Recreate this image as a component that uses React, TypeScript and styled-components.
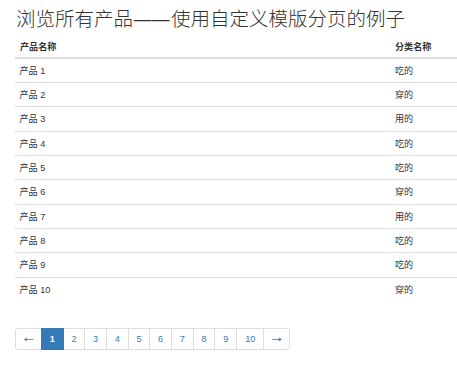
import React from "react";
import styled, { createGlobalStyle } from "styled-components";

const GlobalStyle = createGlobalStyle`
  html, body { margin: 0; padding: 0; background: #fff; }
  body {
    font-family: "Liberation Sans", "Noto Sans CJK SC", Arial, sans-serif;
    color: #333;
    font-size: 9.1px;
  }
`;

const Page = styled.div`
  padding: 0 0 0 15px;
`;

const Title = styled.h2`
  margin: 7px 0 5px 1px;
  height: 21.5px;
  font-size: 19.5px;
  line-height: 21.5px;
  font-weight: 300;
  color: #333;
  font-family: "Noto Sans CJK SC", "Liberation Sans", sans-serif;
  white-space: nowrap;
`;

const Dash = styled.span`
  font-family: "DejaVu Sans", sans-serif;
  font-weight: 400;
  line-height: 0;
  letter-spacing: -1.5px;
  margin-right: 2px;
`;

const Table = styled.table`
  width: 442px;
  border-collapse: collapse;
  border-spacing: 0;
  margin-bottom: 0;
`;

const Th = styled.th<{ $w: number }>`
  width: ${(p) => p.$w}px;
  text-align: left;
  font-weight: 700;
  padding: 6px 5px 4.4px;
  line-height: 13px;
  border-bottom: 2px solid #ddd;
  font-family: "Noto Sans CJK SC", sans-serif;
  font-size: 9.1px;
  box-sizing: border-box;
`;

const Td = styled.td`
  padding: 6px 5px 4px;
  line-height: 13.3px;
  border-top: 1px solid #ddd;
  font-size: 9.1px;
  &:first-child { padding-left: 4.5px; }
`;

const Row = styled.tr`
  &:first-child td { border-top: none; }
`;

const Pager = styled.ul`
  display: flex;
  list-style: none;
  margin: 27px 0 0;
  padding: 0;
`;

const PageItem = styled.li<{ $active?: boolean; $disabled?: boolean; $w: number }>`
  box-sizing: border-box;
  width: ${(p) => p.$w}px;
  height: 22px;
  display: flex;
  align-items: center;
  justify-content: center;
  border: 1px solid ${(p) => (p.$active ? "#337ab7" : "#ddd")};
  margin-left: -1px;
  &:first-child { margin-left: 0; border-radius: 2.6px 0 0 2.6px; }
  &:last-child { border-radius: 0 2.6px 2.6px 0; }
  background: ${(p) => (p.$active ? "#337ab7" : "#fff")};
  color: ${(p) => (p.$active ? "#fff" : p.$disabled ? "#777" : "#337ab7")};
  font-size: 9.1px;
  font-weight: ${(p) => (p.$active ? 700 : 400)};
  position: relative;
  z-index: ${(p) => (p.$active ? 2 : 1)};
`;

const Arrow = styled.span`
  font-family: "DejaVu Sans", sans-serif;
  font-size: 9px;
  transform: scaleX(1.4);
`;

const products = [
  ["产品 1", "吃的"],
  ["产品 2", "穿的"],
  ["产品 3", "用的"],
  ["产品 4", "吃的"],
  ["产品 5", "吃的"],
  ["产品 6", "穿的"],
  ["产品 7", "用的"],
  ["产品 8", "吃的"],
  ["产品 9", "吃的"],
  ["产品 10", "穿的"],
];

const pages = [
  { label: "←", w: 26.7, disabled: true, arrow: true },
  { label: "1", w: 23, active: true },
  { label: "2", w: 22.6 },
  { label: "3", w: 22.7 },
  { label: "4", w: 22.7 },
  { label: "5", w: 22.6 },
  { label: "6", w: 22.7 },
  { label: "7", w: 22.7 },
  { label: "8", w: 22.6 },
  { label: "9", w: 23 },
  { label: "10", w: 28 },
  { label: "→", w: 26.4, arrow: true },
];

export default function App() {
  return (
    <Page>
      <GlobalStyle />
      <Title>
        浏览所有产品<Dash>——</Dash>使用自定义模版分页的例子
      </Title>
      <Table>
        <thead>
          <tr>
            <Th $w={375}>产品名称</Th>
            <Th $w={67}>分类名称</Th>
          </tr>
        </thead>
        <tbody>
          {products.map(([n, c]) => (
            <Row key={n}>
              <Td>{n}</Td>
              <Td>{c}</Td>
            </Row>
          ))}
        </tbody>
      </Table>
      <Pager>
        {pages.map((p) => (
          <PageItem key={p.label} $w={p.w} $active={p.active} $disabled={p.disabled}>
            {p.arrow ? <Arrow>{p.label}</Arrow> : p.label}
          </PageItem>
        ))}
      </Pager>
    </Page>
  );
}
